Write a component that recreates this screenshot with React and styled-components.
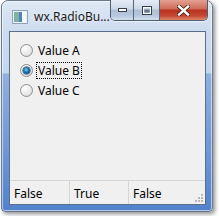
import React from "react";
import styled, { createGlobalStyle } from "styled-components";

const Global = createGlobalStyle`
  html, body {
    margin: 0;
    padding: 0;
    background: #ffffff;
  }
  body {
    font-family: "Noto Sans", "Liberation Sans", sans-serif;
  }
`;

const Page = styled.div`
  width: 219px;
  height: 216px;
  overflow: hidden;
  padding: 0 0 0 1px;
  box-sizing: border-box;
`;

const Window = styled.div`
  width: 212px;
  height: 212px;
  box-sizing: border-box;
  display: flex;
  flex-direction: column;
  border: 1px solid #6b7a8d;
  border-radius: 7px 7px 4px 4px;
  background: linear-gradient(
    180deg,
    #dfe8f4 0%,
    #cddcef 14%,
    #c4d7ee 34%,
    #8fb0df 35%,
    #6f98d6 70%,
    #5282cd 100%
  );
  box-shadow: 2px 2px 4px rgba(0, 0, 0, 0.45), inset 0 0 0 1px rgba(255, 255, 255, 0.55);
`;

const TitleBar = styled.div`
  height: 30px;
  display: flex;
  align-items: flex-start;
  padding-left: 10px;
`;

const TitleIcon = styled.svg`
  width: 16px;
  height: 14px;
  margin-top: 9px;
  flex-shrink: 0;
`;

const Title = styled.div`
  margin: 7px 0 0 6px;
  font-size: 12px;
  color: #1b1b1b;
  white-space: nowrap;
  text-shadow: 0 0 6px rgba(255, 255, 255, 0.9);
`;

const Captions = styled.div`
  margin-left: auto;
  margin-right: 4px;
  margin-top: -1px;
  display: flex;
  height: 20px;
  border: 1px solid #4f5d70;
  border-top: none;
  border-radius: 0 0 5px 5px;
  overflow: hidden;
  box-shadow: 0 1px 0 rgba(255, 255, 255, 0.6);
`;

const CapButton = styled.div`
  width: ${(p) => p.$w}px;
  display: flex;
  align-items: center;
  justify-content: center;
  box-sizing: border-box;
  border-left: ${(p) => (p.$first ? "none" : "1px solid #56667c")};
  background: ${(p) =>
    p.$close
      ? "linear-gradient(180deg, #e2a093 0%, #d06a58 45%, #b8321d 50%, #c54a35 80%, #de8a6c 100%)"
      : "linear-gradient(180deg, #e4ecf6 0%, #cdd9e8 45%, #aebfd6 50%, #b8c9df 80%, #d4e0ee 100%)"};
`;

const Client = styled.div`
  flex: 1;
  margin: 0 6px 6px 7px;
  border: 1px solid #5b6e8c;
  background: #f0f0f0;
  display: flex;
  flex-direction: column;
`;

const RadioList = styled.div`
  display: flex;
  flex-direction: column;
  gap: 7px;
  padding: 12px 0 0 10px;
`;

const RadioRow = styled.label`
  display: flex;
  align-items: center;
  height: 13px;
  font-size: 12px;
  color: #000;
`;

const Circle = styled.span`
  width: 13px;
  height: 13px;
  box-sizing: border-box;
  border-radius: 50%;
  border: 1px solid #8e8f8f;
  background: radial-gradient(circle at 35% 30%, #ffffff 0%, #ececec 50%, #cfcfcf 100%);
  display: flex;
  align-items: center;
  justify-content: center;
  flex-shrink: 0;

  &::after {
    content: "";
    display: ${(p) => (p.$on ? "block" : "none")};
    width: 7px;
    height: 7px;
    border-radius: 50%;
    background: radial-gradient(circle at 45% 40%, #7fd6f5 0%, #1a78b4 40%, #0a3a6a 100%);
    box-shadow: 0 0 0 0.5px #14324f;
  }
`;

const Label = styled.span`
  margin-left: 3px;
  padding: 0 1px;
  line-height: 15px;
  border: 1px dotted ${(p) => (p.$focus ? "#000" : "transparent")};
`;

const StatusBar = styled.div`
  margin-top: auto;
  height: 23px;
  border-top: 1px solid #d5d5d5;
  display: grid;
  grid-template-columns: 59px 59px 1fr;
  position: relative;
`;

const Field = styled.div`
  font-size: 12px;
  color: #000;
  padding: 4px 0 0 4px;
  border-left: ${(p) => (p.$first ? "none" : "1px solid #d5d5d5")};
`;

const Grip = styled.svg`
  position: absolute;
  right: 2px;
  bottom: 2px;
`;

const radios = [
  { label: "Value A", on: false },
  { label: "Value B", on: true },
  { label: "Value C", on: false },
];

export default function App() {
  return (
    <Page>
      <Global />
      <Window>
        <TitleBar>
          <TitleIcon viewBox="0 0 16 14">
            <rect x="0.5" y="0.5" width="15" height="13" fill="#e9f1f7" stroke="#8fa4b8" />
            <rect x="2" y="2" width="5" height="10" fill="#7fb2a0" />
            <rect x="7" y="2" width="3" height="10" fill="#4f86b8" />
            <rect x="10" y="2" width="4" height="10" fill="#f5f8fb" />
          </TitleIcon>
          <Title>wx.RadioBu...</Title>
          <Captions>
            <CapButton $w={23} $first>
              <svg width="9" height="4" viewBox="0 0 9 4">
                <rect x="0.5" y="0.5" width="8" height="3" fill="#fff" stroke="#36404d" />
              </svg>
            </CapButton>
            <CapButton $w={26}>
              <svg width="10" height="9" viewBox="0 0 10 9">
                <rect x="0.5" y="0.5" width="9" height="8" fill="none" stroke="#36404d" />
                <rect x="1.5" y="1.5" width="7" height="6" fill="none" stroke="#fff" />
                <rect x="2.5" y="3.5" width="5" height="3" fill="#6a7686" />
              </svg>
            </CapButton>
            <CapButton $w={49} $close>
              <svg width="13" height="11" viewBox="0 0 13 11">
                <path d="M2 1.5 L11 9.5 M11 1.5 L2 9.5" stroke="#4a1c14" strokeWidth="4" strokeLinecap="square" />
                <path d="M2 1.5 L11 9.5 M11 1.5 L2 9.5" stroke="#ffffff" strokeWidth="2.4" strokeLinecap="square" />
              </svg>
            </CapButton>
          </Captions>
        </TitleBar>
        <Client>
          <RadioList>
            {radios.map((r) => (
              <RadioRow key={r.label}>
                <Circle $on={r.on} />
                <Label $focus={r.on}>{r.label}</Label>
              </RadioRow>
            ))}
          </RadioList>
          <StatusBar>
            <Field $first>False</Field>
            <Field>True</Field>
            <Field>False</Field>
            <Grip width="8" height="8" viewBox="0 0 8 8">
              {[
                [6, 0],
                [6, 3],
                [3, 3],
                [6, 6],
                [3, 6],
                [0, 6],
              ].map(([x, y]) => (
                <rect key={`${x}-${y}`} x={x} y={y} width="2" height="2" fill="#b8b8b8" />
              ))}
            </Grip>
          </StatusBar>
        </Client>
      </Window>
    </Page>
  );
}
